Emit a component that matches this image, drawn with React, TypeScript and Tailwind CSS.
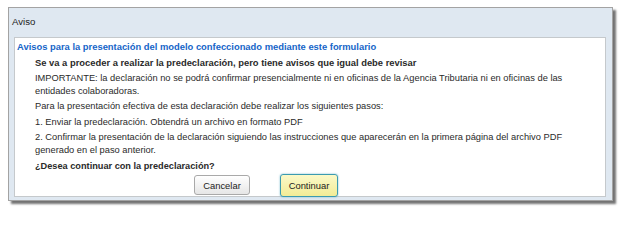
const font = { fontFamily: '"Liberation Sans", Arial, sans-serif' }

export default function App() {
  return (
    <div className="w-[624px] h-[213px] bg-white pt-[7px] pl-[8px]" style={font}>
      <div className="w-[605px] h-[194px] border border-[#a3a3a3] bg-[#dfe8f1] shadow-[3px_3px_2px_rgba(0,0,0,0.55)] flex flex-col">
        <div className="h-[29px] flex items-center pl-[3px] text-[9.6px] text-[#222]">Aviso</div>
        <div className="ml-[5px] mr-[6px] h-[160px] bg-white border border-[#c5c9cc] pt-[2px] pl-[2px]">
          <div className="text-[9.4px] leading-[13px] font-bold text-[#1565c8]">
            Avisos para la presentación del modelo confeccionado mediante este formulario
          </div>
          <div className="pl-[18px] pt-[3px] text-[9.3px] leading-[13px] text-[#2a2a2a] flex flex-col gap-[2.5px]">
            <p className="font-bold text-[9.4px]">Se va a proceder a realizar la predeclaración, pero tiene avisos que igual debe revisar</p>
            <p>
              IMPORTANTE: la declaración no se podrá confirmar presencialmente ni en oficinas de la Agencia Tributaria ni en oficinas de las
              <br />
              entidades colaboradoras.
            </p>
            <p>Para la presentación efectiva de esta declaración debe realizar los siguientes pasos:</p>
            <p>1. Enviar la predeclaración. Obtendrá un archivo en formato PDF</p>
            <p>
              2. Confirmar la presentación de la declaración siguiendo las instrucciones que aparecerán en la primera página del archivo PDF
              <br />
              generado en el paso anterior.
            </p>
            <p className="font-bold text-[9.2px]">¿Desea continuar con la predeclaración?</p>
            <div className="flex items-center gap-[30px] pl-[159px] h-[23px] -mt-[1.5px]">
              <button className="w-[56px] h-[20px] rounded-[3px] border border-[#a9a9a9] bg-gradient-to-b from-white to-[#e6e6e6] text-[9.4px] text-[#222]">
                Cancelar
              </button>
              <button className="w-[58px] h-[23px] rounded-[3px] border border-[#3c9bb0] bg-gradient-to-b from-[#fbf9c8] to-[#f2ec96] shadow-[0_0_2px_#6fb6c8] text-[9.4px] text-[#222]">
                Continuar
              </button>
            </div>
          </div>
        </div>
      </div>
    </div>
  )
}
